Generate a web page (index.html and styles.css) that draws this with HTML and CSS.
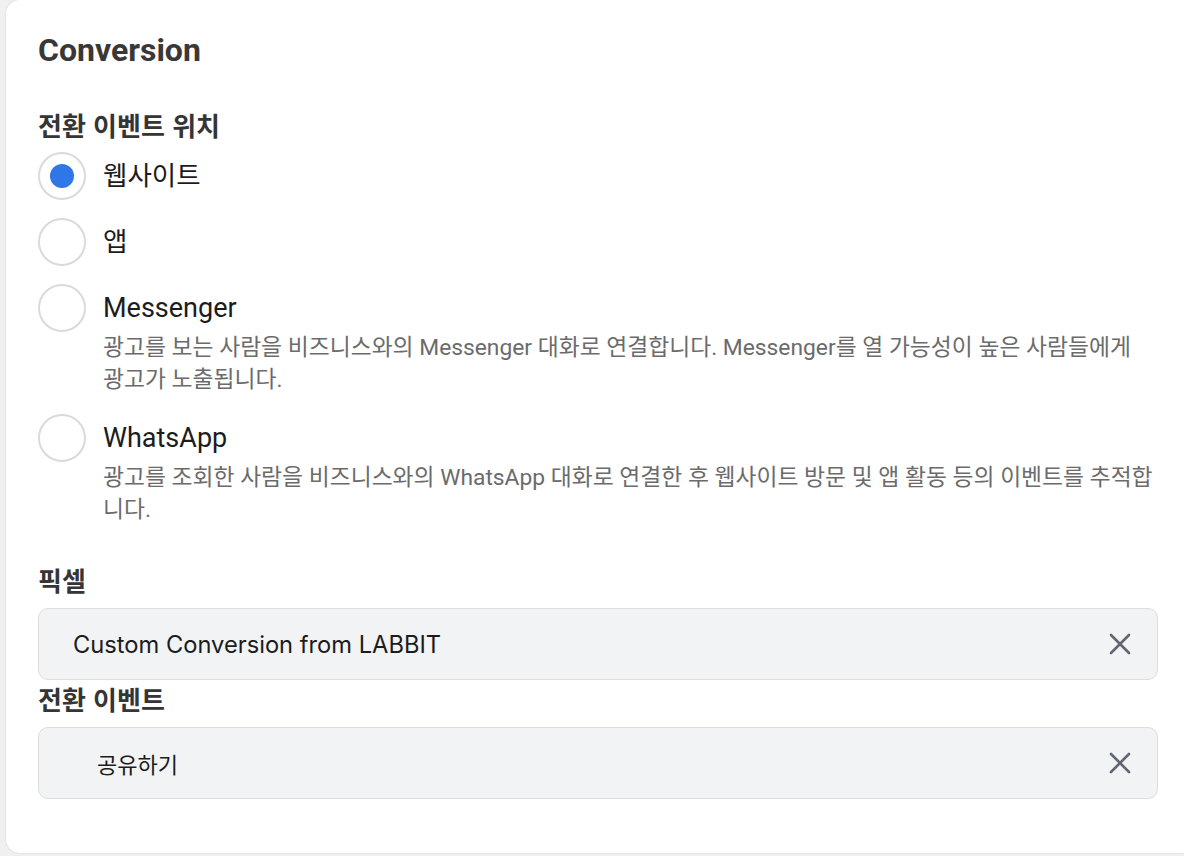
FILE: index.html
```html
<!DOCTYPE html>
<html lang="ko">
<head>
<meta charset="utf-8">
<link rel="stylesheet" href="styles.css">
</head>
<body>
<div class="card">
  <h1 class="title">Conversion</h1>
  <div class="section">
    <div class="label">전환 이벤트 위치</div>
    <div class="radios">
      <div class="radio-row">
        <span class="radio checked"><span class="dot"></span></span>
        <div class="radio-text"><div class="radio-label">웹사이트</div></div>
      </div>
      <div class="radio-row">
        <span class="radio"></span>
        <div class="radio-text"><div class="radio-label">앱</div></div>
      </div>
      <div class="radio-row">
        <span class="radio"></span>
        <div class="radio-text">
          <div class="radio-label latin">Messenger</div>
          <div class="desc">광고를 보는 사람을 비즈니스와의 Messenger 대화로 연결합니다. Messenger를 열 가능성이 높은 사람들에게 광고가 노출됩니다.</div>
        </div>
      </div>
      <div class="radio-row">
        <span class="radio"></span>
        <div class="radio-text">
          <div class="radio-label latin">WhatsApp</div>
          <div class="desc">광고를 조회한 사람을 비즈니스와의 WhatsApp 대화로 연결한 후 웹사이트 방문 및 앱 활동 등의 이벤트를 추적합니다.</div>
        </div>
      </div>
    </div>
  </div>
  <div class="label pixel-label">픽셀</div>
  <div class="field">
    <span class="field-text">Custom Conversion from LABBIT</span>
    <svg class="close" width="22" height="22" viewBox="0 0 22 22"><path d="M2 2 L20 20 M20 2 L2 20" stroke="#606770" stroke-width="2.6" stroke-linecap="round"/></svg>
  </div>
  <div class="label event-label">전환 이벤트</div>
  <div class="field">
    <span class="field-text indent">공유하기</span>
    <svg class="close" width="22" height="22" viewBox="0 0 22 22"><path d="M2 2 L20 20 M20 2 L2 20" stroke="#606770" stroke-width="2.6" stroke-linecap="round"/></svg>
  </div>
</div>
</body>
</html>
```

FILE: styles.css
```css
* { box-sizing: border-box; }
html, body { margin: 0; padding: 0; }
body {
  background: #f0f0f0;
  width: 1184px;
  height: 856px;
  overflow: hidden;
  font-family: Roboto, "Noto Sans CJK KR", sans-serif;
}
.card {
  margin-left: 6px;
  width: 1190px;
  height: 853px;
  background: #fff;
  border-radius: 14px;
  box-shadow: 0 0 2px rgba(0,0,0,0.15);
  padding: 30px 0 0 32px;
}
.title {
  margin: 0;
  font-family: Roboto, "Noto Sans CJK KR", sans-serif;
  font-weight: 700;
  font-size: 32px;
  line-height: 40px;
  color: #383838;
}
.section { margin-top: 39px; }
.label {
  font-family: "Noto Sans CJK KR", sans-serif;
  font-weight: 700;
  font-size: 26px;
  line-height: 32px;
  color: #353535;
}
.radios {
  display: flex;
  flex-direction: column;
  gap: 18px;
  margin-top: 11px;
}
.radio-row {
  display: flex;
  align-items: flex-start;
  gap: 17px;
}
.radio {
  flex: none;
  width: 48px;
  height: 48px;
  border-radius: 50%;
  border: 2px solid #dadada;
  display: flex;
  align-items: center;
  justify-content: center;
  background: #fff;
}
.dot {
  width: 24px;
  height: 24px;
  border-radius: 50%;
  background: #2f76e6;
}
.radio-text { width: 1054px; }
.radio-label {
  font-family: Roboto, "Noto Sans CJK KR", sans-serif;
  font-size: 26.5px;
  line-height: 48px;
  color: #1c1c1c;
}
.radio-label.latin { font-size: 27px; }
.desc {
  font-family: Roboto, "Noto Sans CJK KR", sans-serif;
  font-size: 22.8px;
  line-height: 32px;
  color: #6b6b6b;
}
.pixel-label { margin-top: 38px; }
.field {
  width: 1120px;
  height: 72px;
  background: #f2f3f5;
  border: 1.5px solid #dcdde0;
  border-radius: 10px;
  display: flex;
  align-items: center;
  justify-content: space-between;
  padding: 0 26px 0 34px;
  margin-top: 12px;
}
.field-text {
  font-family: Inter, "Noto Sans CJK KR", sans-serif;
  font-size: 23.7px;
  color: #1c1c1c;
}
.field-text.indent { padding-left: 24px; font-family: "Noto Sans CJK KR", sans-serif; font-size: 22px; }
.event-label { margin-top: 3px; }
.close { flex: none; }
```
